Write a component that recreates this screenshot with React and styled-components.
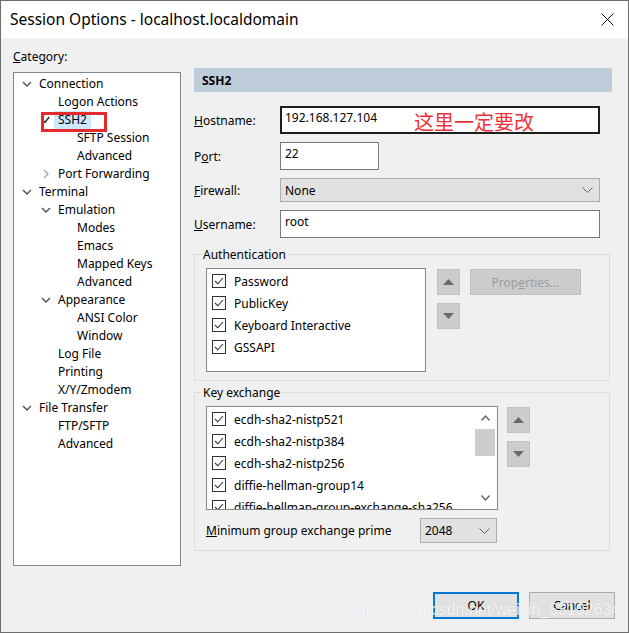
import styled, { createGlobalStyle } from 'styled-components';

const GlobalStyle = createGlobalStyle`
  html, body {
    margin: 0;
    padding: 0;
    background: #f0f0f0;
  }
  body {
    font-family: 'Noto Sans', 'Segoe UI', sans-serif;
    font-size: 12px;
    color: #000;
  }
  * {
    box-sizing: border-box;
  }
`;

const Window = styled.div`
  position: relative;
  width: 629px;
  height: 633px;
  border: 1px solid #6e6e6e;
  background: #f0f0f0;
  display: flex;
  flex-direction: column;
  overflow: hidden;
`;

const TitleBar = styled.div`
  height: 37px;
  flex: none;
  background: #fff;
  display: flex;
  align-items: center;
  justify-content: space-between;
  padding: 0 14px 0 9px;
`;

const Title = styled.span`
  font-size: 15.5px;
  line-height: 20px;
  margin-top: -1px;
`;

const CloseButton = styled.svg`
  width: 13px;
  height: 13px;
`;

const Body = styled.div`
  flex: 1;
  display: flex;
  flex-direction: column;
  padding: 10px 0 0 12px;
`;

const Main = styled.div`
  display: flex;
  align-items: flex-start;
`;

const Sidebar = styled.div`
  width: 168px;
  flex: none;
`;

const CategoryLabel = styled.div`
  line-height: 16px;
  height: 16px;
  margin: 1px 0 7px;
`;

const Tree = styled.div`
  height: 494px;
  border: 1px solid #828790;
  background: #fff;
  padding-top: 2px;
`;

const TreeRow = styled.div`
  position: relative;
  height: 18px;
  display: flex;
  align-items: center;
  padding-left: ${(p) => 6 + p.$level * 19}px;
`;

const Toggle = styled.span`
  width: 14px;
  height: 18px;
  margin-right: 1px;
  display: flex;
  align-items: center;
  justify-content: center;
`;

const TreeLabel = styled.span`
  line-height: 18px;
  padding: 0 4px;
  white-space: nowrap;
  background: ${(p) => (p.$selected ? '#cce8ff' : 'transparent')};
`;

const RedMark = styled.span`
  position: absolute;
  left: 27px;
  top: 1px;
  width: 66px;
  height: 20px;
  border: 3px solid #e52a2d;
  pointer-events: none;
`;

const Panel = styled.div`
  width: 418px;
  flex: none;
  margin: 20px 0 0 13px;
`;

const PanelHeader = styled.div`
  height: 24px;
  background: #bfcddb;
  padding-left: 8px;
  display: flex;
  align-items: center;
  font-weight: 700;
`;

const Form = styled.div`
  margin-top: 14px;
  padding-right: 12px;
`;

const FieldRow = styled.div`
  display: flex;
  align-items: center;
  margin-bottom: 8px;
`;

const FieldLabel = styled.label`
  width: 86px;
  flex: none;
`;

const TextBox = styled.div`
  position: relative;
  width: ${(p) => p.$width || 320}px;
  height: 28px;
  background: #fff;
  border: ${(p) => (p.$focused ? '2px solid #1e1e1e' : '1px solid #7a7a7a')};
  padding: ${(p) => (p.$focused ? '2px 0 0 3px' : '3px 0 0 4px')};
  line-height: 16px;
`;

const Note = styled.span`
  position: absolute;
  left: 132px;
  top: 1px;
  font-family: 'Noto Sans CJK SC', sans-serif;
  font-size: 20px;
  line-height: 26px;
  color: #ee3338;
`;

const Select = styled.div`
  width: ${(p) => p.$width || 320}px;
  height: ${(p) => p.$height || 24}px;
  background: #e1e1e1;
  border: 1px solid #adadad;
  display: flex;
  align-items: center;
  justify-content: space-between;
  padding: 0 6px 0 4px;
`;

const Group = styled.div`
  border: 1px solid #dcdcdc;
  margin: ${(p) => p.$top}px 2px 0 0;
  padding: 0 8px ${(p) => p.$bottom}px 11px;
`;

const GroupTitle = styled.div`
  width: fit-content;
  margin: -8px 0 0 -5px;
  padding: 0 2px;
  line-height: 16px;
  background: #f0f0f0;
`;

const GroupContent = styled.div`
  display: flex;
  align-items: flex-start;
  margin-top: 5px;
`;

const ListBox = styled.div`
  width: ${(p) => p.$width}px;
  height: 104px;
  flex: none;
  background: #fff;
  border: 1px solid #828790;
  display: flex;
  overflow: hidden;
`;

const ListItems = styled.div`
  flex: 1;
  padding-top: 1px;
  overflow: hidden;
`;

const ListItem = styled.div`
  height: 22px;
  display: flex;
  align-items: center;
  padding-left: 5px;
  white-space: nowrap;
`;

const CheckBox = styled.span`
  width: 14px;
  height: 14px;
  flex: none;
  border: 1px solid #333;
  background: #fff;
  margin-right: 8px;
  display: flex;
  align-items: center;
  justify-content: center;
`;

const ScrollBar = styled.div`
  width: 22px;
  flex: none;
  display: flex;
  flex-direction: column;
  align-items: flex-start;
`;

const ScrollArrow = styled.div`
  width: 20px;
  height: 22px;
  display: flex;
  align-items: center;
  justify-content: center;
`;

const ScrollTrack = styled.div`
  flex: 1;
  width: 20px;
`;

const ScrollThumb = styled.div`
  width: 20px;
  height: 27px;
  background: #cdcdcd;
`;

const MoveButtons = styled.div`
  display: flex;
  flex-direction: column;
  gap: 8px;
  margin: 1px 0 0 ${(p) => p.$gap}px;
`;

const MoveButton = styled.div`
  width: 23px;
  height: 26px;
  background: #cccccc;
  border: 1px solid #c2c2c2;
  display: flex;
  align-items: center;
  justify-content: center;
`;

const DisabledButton = styled.div`
  width: 111px;
  height: 26px;
  margin: 1px 0 0 10px;
  background: #cccccc;
  border: 1px solid #bfbfbf;
  color: #9c9c9c;
  display: flex;
  align-items: center;
  justify-content: center;
`;

const PrimeRow = styled.div`
  display: flex;
  align-items: center;
  margin-top: 8px;
`;

const PrimeLabel = styled.span`
  width: 214px;
  flex: none;
`;

const Footer = styled.div`
  margin-top: auto;
  display: flex;
  justify-content: flex-end;
  gap: 10px;
  padding: 0 13px 13px 0;
`;

const DialogButton = styled.div`
  width: 86px;
  height: 27px;
  background: #e1e1e1;
  border: ${(p) => (p.$default ? '2px solid #0078d7' : '1px solid #adadad')};
  display: flex;
  align-items: center;
  justify-content: center;
`;

const Watermark = styled.div`
  position: absolute;
  left: 347px;
  top: 599px;
  font-family: 'Liberation Sans', Arial, sans-serif;
  font-size: 16px;
  line-height: 20px;
  color: rgba(255, 255, 255, 0.85);
  text-shadow: 0 0 1px rgba(0, 0, 0, 0.15);
  white-space: nowrap;
  pointer-events: none;
`;

const treeItems = [
  { label: 'Connection', level: 0, toggle: 'down' },
  { label: 'Logon Actions', level: 1 },
  { label: 'SSH2', level: 1, toggle: 'check', selected: true, marked: true },
  { label: 'SFTP Session', level: 2 },
  { label: 'Advanced', level: 2 },
  { label: 'Port Forwarding', level: 1, toggle: 'right' },
  { label: 'Terminal', level: 0, toggle: 'down' },
  { label: 'Emulation', level: 1, toggle: 'down' },
  { label: 'Modes', level: 2 },
  { label: 'Emacs', level: 2 },
  { label: 'Mapped Keys', level: 2 },
  { label: 'Advanced', level: 2 },
  { label: 'Appearance', level: 1, toggle: 'down' },
  { label: 'ANSI Color', level: 2 },
  { label: 'Window', level: 2 },
  { label: 'Log File', level: 1 },
  { label: 'Printing', level: 1 },
  { label: 'X/Y/Zmodem', level: 1 },
  { label: 'File Transfer', level: 0, toggle: 'down' },
  { label: 'FTP/SFTP', level: 1 },
  { label: 'Advanced', level: 1 },
];

const authMethods = ['Password', 'PublicKey', 'Keyboard Interactive', 'GSSAPI'];

const kexMethods = [
  'ecdh-sha2-nistp521',
  'ecdh-sha2-nistp384',
  'ecdh-sha2-nistp256',
  'diffie-hellman-group14',
  'diffie-hellman-group-exchange-sha256',
];

const Chevron = ({ dir }) => {
  if (dir === 'right') {
    return (
      <svg width="6" height="10" viewBox="0 0 6 10">
        <path d="M1 1 L5 5 L1 9" fill="none" stroke="#a6a6a6" strokeWidth="1.4" />
      </svg>
    );
  }
  if (dir === 'check') {
    return (
      <svg width="8" height="8" viewBox="0 0 8 8">
        <path d="M0.8 4.2 L3 6.4 L7.2 1" fill="none" stroke="#333" strokeWidth="1.6" />
      </svg>
    );
  }
  return (
    <svg width="10" height="6" viewBox="0 0 10 6">
      <path d="M1 1 L5 5 L9 1" fill="none" stroke="#505050" strokeWidth="1.4" />
    </svg>
  );
};

const CheckMark = () => (
  <svg width="10" height="8" viewBox="0 0 10 8">
    <path d="M1 4 L3.8 6.8 L9 1" fill="none" stroke="#333" strokeWidth="1.1" />
  </svg>
);

const Triangle = ({ up }) => (
  <svg width="11" height="6" viewBox="0 0 11 6">
    <path d={up ? 'M0 6 L5.5 0 L11 6 Z' : 'M0 0 L5.5 6 L11 0 Z'} fill="#6a6a6a" />
  </svg>
);

const DropArrow = () => (
  <svg width="11" height="6" viewBox="0 0 11 6">
    <path d="M0.5 0.5 L5.5 5.5 L10.5 0.5" fill="none" stroke="#606060" strokeWidth="1" />
  </svg>
);

const ScrollChevron = ({ up }) => (
  <svg width="9" height="6" viewBox="0 0 9 6">
    <path d={up ? 'M0.5 5.5 L4.5 1 L8.5 5.5' : 'M0.5 0.5 L4.5 5 L8.5 0.5'} fill="none" stroke="#606060" strokeWidth="1.3" />
  </svg>
);

const CheckList = ({ items, width, scroll }) => (
  <ListBox $width={width}>
    <ListItems>
      {items.map((item) => (
        <ListItem key={item}>
          <CheckBox>
            <CheckMark />
          </CheckBox>
          {item}
        </ListItem>
      ))}
    </ListItems>
    {scroll && (
      <ScrollBar>
        <ScrollArrow>
          <ScrollChevron up />
        </ScrollArrow>
        <ScrollTrack>
          <ScrollThumb />
        </ScrollTrack>
        <ScrollArrow>
          <ScrollChevron />
        </ScrollArrow>
      </ScrollBar>
    )}
  </ListBox>
);

const Moves = ({ gap }) => (
  <MoveButtons $gap={gap}>
    <MoveButton>
      <Triangle up />
    </MoveButton>
    <MoveButton>
      <Triangle />
    </MoveButton>
  </MoveButtons>
);

const App = () => (
  <>
    <GlobalStyle />
    <Window>
      <TitleBar>
        <Title>Session Options - localhost.localdomain</Title>
        <CloseButton viewBox="0 0 13 13">
          <path d="M0.5 0.5 L12.5 12.5 M12.5 0.5 L0.5 12.5" stroke="#111" strokeWidth="1" />
        </CloseButton>
      </TitleBar>
      <Body>
        <Main>
          <Sidebar>
            <CategoryLabel>
              <u>C</u>ategory:
            </CategoryLabel>
            <Tree>
              {treeItems.map((item, i) => (
                <TreeRow key={i} $level={item.level}>
                  <Toggle>{item.toggle && <Chevron dir={item.toggle} />}</Toggle>
                  <TreeLabel $selected={item.selected}>{item.label}</TreeLabel>
                  {item.marked && <RedMark />}
                </TreeRow>
              ))}
            </Tree>
          </Sidebar>
          <Panel>
            <PanelHeader>SSH2</PanelHeader>
            <Form>
              <FieldRow>
                <FieldLabel>
                  <u>H</u>ostname:
                </FieldLabel>
                <TextBox $focused>
                  192.168.127.104
                  <Note>这里一定要改</Note>
                </TextBox>
              </FieldRow>
              <FieldRow>
                <FieldLabel>
                  P<u>o</u>rt:
                </FieldLabel>
                <TextBox $width={99}>22</TextBox>
              </FieldRow>
              <FieldRow>
                <FieldLabel>
                  <u>F</u>irewall:
                </FieldLabel>
                <Select>
                  None
                  <DropArrow />
                </Select>
              </FieldRow>
              <FieldRow>
                <FieldLabel>
                  <u>U</u>sername:
                </FieldLabel>
                <TextBox>root</TextBox>
              </FieldRow>
            </Form>
            <Group $top={16} $bottom={8}>
              <GroupTitle>Authentication</GroupTitle>
              <GroupContent>
                <CheckList items={authMethods} width={220} />
                <Moves gap={11} />
                <DisabledButton>
                  Prop<u>e</u>rties...
                </DisabledButton>
              </GroupContent>
            </Group>
            <Group $top={11} $bottom={7}>
              <GroupTitle>Key exchange</GroupTitle>
              <GroupContent>
                <CheckList items={kexMethods} width={292} scroll />
                <Moves gap={9} />
              </GroupContent>
              <PrimeRow>
                <PrimeLabel>
                  <u>M</u>inimum group exchange prime
                </PrimeLabel>
                <Select $width={77} $height={25}>
                  2048
                  <DropArrow />
                </Select>
              </PrimeRow>
            </Group>
          </Panel>
        </Main>
        <Footer>
          <DialogButton $default>OK</DialogButton>
          <DialogButton>Cancel</DialogButton>
        </Footer>
      </Body>
      <Watermark>https://blog.csdn.net/weixin_53102634</Watermark>
    </Window>
  </>
);

export default App;
